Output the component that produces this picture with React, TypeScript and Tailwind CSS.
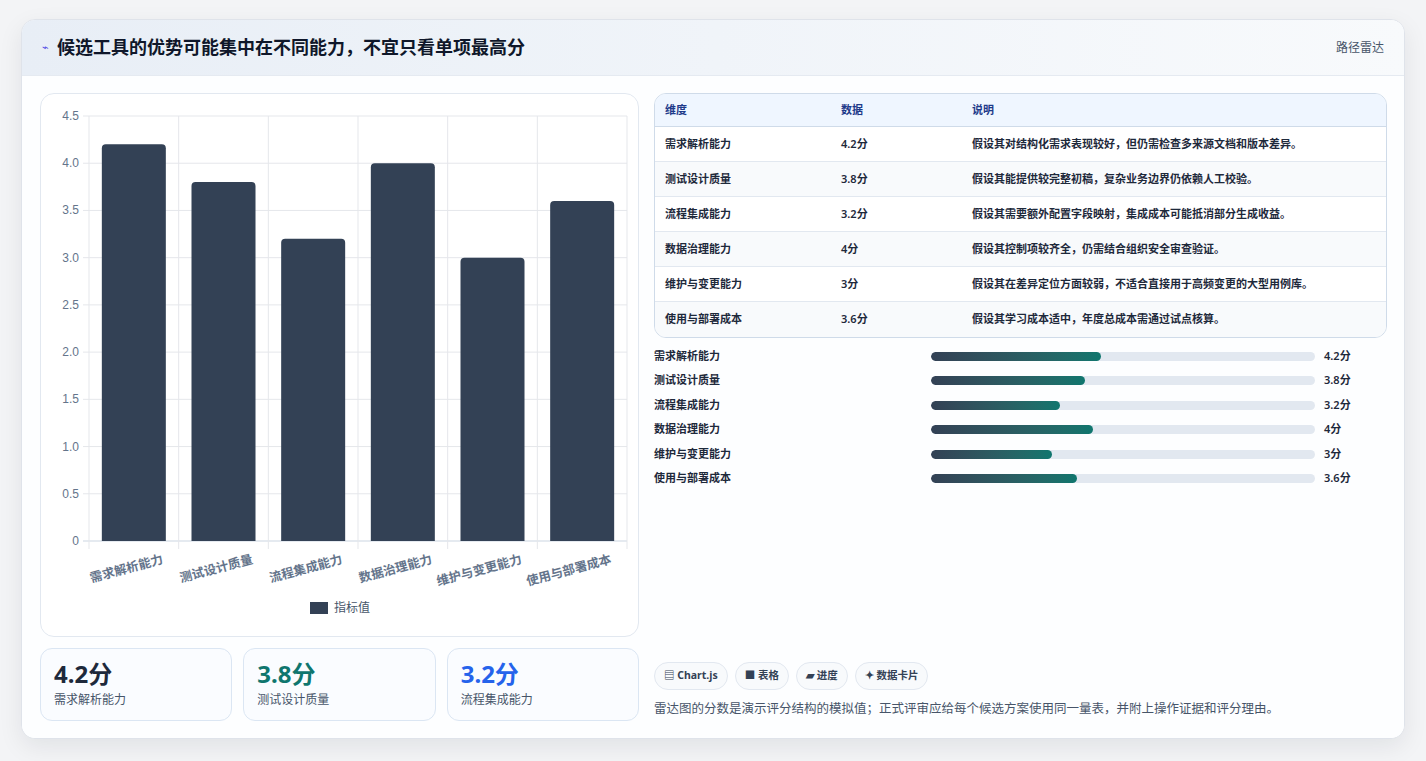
import React from "react";

const data = [
  { n: "需求解析能力", v: 4.2, d: "假设其对结构化需求表现较好，但仍需检查多来源文档和版本差异。" },
  { n: "测试设计质量", v: 3.8, d: "假设其能提供较完整初稿，复杂业务边界仍依赖人工校验。" },
  { n: "流程集成能力", v: 3.2, d: "假设其需要额外配置字段映射，集成成本可能抵消部分生成收益。" },
  { n: "数据治理能力", v: 4, d: "假设其控制项较齐全，仍需结合组织安全审查验证。" },
  { n: "维护与变更能力", v: 3, d: "假设其在差异定位方面较弱，不适合直接用于高频变更的大型用例库。" },
  { n: "使用与部署成本", v: 3.6, d: "假设其学习成本适中，年度总成本需通过试点核算。" },
];

function Chart() {
  // coords relative to card (card at page x40,y93)
  const x0 = 48, x1 = 586, y0 = 447, yTop = 22;
  const h = y0 - yTop;
  const cw = (x1 - x0) / 6;
  const ticks = [0, 0.5, 1, 1.5, 2, 2.5, 3, 3.5, 4, 4.5];
  return (
    <svg width="598" height="541" className="block">
      {ticks.map((t) => {
        const y = y0 - (t / 4.5) * h;
        return (
          <g key={t}>
            <line x1={x0 - 6} x2={x1} y1={y} y2={y} stroke={t === 0 ? "#cbd5e1" : "#e5e7eb"} />
            <text x={x0 - 10} y={y + 4} textAnchor="end" fontSize="12" fill="#64748b" fontFamily="Liberation Sans, sans-serif">
              {t === 0 ? "0" : t.toFixed(1)}
            </text>
          </g>
        );
      })}
      {Array.from({ length: 7 }).map((_, i) => (
        <line key={i} x1={x0 + i * cw} x2={x0 + i * cw} y1={yTop} y2={y0 + 8} stroke="#e5e7eb" />
      ))}
      {data.map((d, i) => {
        const cx = x0 + cw * i + cw / 2;
        const bh = (d.v / 4.5) * h;
        return (
          <g key={d.n}>
            <path d={`M${cx - 32} ${y0} V${y0 - bh + 4} Q${cx - 32} ${y0 - bh} ${cx - 28} ${y0 - bh} H${cx + 28} Q${cx + 32} ${y0 - bh} ${cx + 32} ${y0 - bh + 4} V${y0} Z`} fill="#334155" />
            <text transform={`translate(${cx + 30} ${y0 + 22}) rotate(-15)`} textAnchor="end" fontSize="12.5" fontWeight="700" fill="#64748b" fontFamily="Noto Sans CJK SC, sans-serif">
              {d.n}
            </text>
          </g>
        );
      })}
      <rect x="269" y="508" width="18" height="12" fill="#334155" />
      <text x="293" y="518" fontSize="12" fill="#475569" fontFamily="Noto Sans CJK SC, sans-serif">指标值</text>
    </svg>
  );
}

export default function App() {
  return (
    <div className="w-[1426px] h-[761px] bg-[#f3f4f6] pt-[19px] pl-[21px]" style={{ fontFamily: "'Noto Sans', 'Noto Sans CJK SC', sans-serif" }}>
      <div className="w-[1384px] h-[720px] bg-white rounded-[14px] border border-[#dfe3ea] shadow-[0_8px_24px_rgba(15,23,42,0.08)] overflow-hidden flex flex-col">
        <div className="h-[56px] flex items-center justify-between px-5 bg-gradient-to-r from-[#e8eef6] to-[#f8fafc] border-b border-[#e5eaf1]">
          <div className="flex items-center gap-2">
            <span className="text-[#4f46e5] text-[11px]">⌁</span>
            <span className="text-[18px] font-bold text-[#0f172a]">候选工具的优势可能集中在不同能力，不宜只看单项最高分</span>
          </div>
          <span className="text-[12px] text-[#475569]">路径雷达</span>
        </div>
        <div className="flex-1 flex gap-[15px] pl-[18px] pr-[17px] pt-[17px] bg-[#fdfeff]">
          <div className="w-[599px] flex flex-col gap-[11px]">
            <div className="h-[544px] border border-[#e2e8f0] rounded-[14px] bg-white overflow-hidden">
              <Chart />
            </div>
            <div className="grid grid-cols-3 gap-[11px]">
              {[["4.2分", "需求解析能力", "text-[#1e293b]"], ["3.8分", "测试设计质量", "text-[#0f766e]"], ["3.2分", "流程集成能力", "text-[#2563eb]"]].map(([v, l, c]) => (
                <div key={l} className="h-[73px] rounded-[12px] border border-[#dbe6f3] bg-[#fafcff] px-[13px] pt-[10px]">
                  <div className={`text-[24px] font-bold leading-[30px] ${c}`}>{v}</div>
                  <div className="text-[12px] text-[#475569] mt-[2px]">{l}</div>
                </div>
              ))}
            </div>
          </div>
          <div className="flex-1 flex flex-col">
            <div className="border border-[#cfdbe9] rounded-[12px] overflow-hidden">
              <div className="flex h-[33px] items-center bg-[#eff6ff] border-b border-[#cfdbe9] text-[11px] font-bold text-[#1e3a8a]">
                <div className="w-[176px] pl-[10px]">维度</div>
                <div className="w-[131px] pl-[10px]">数据</div>
                <div className="pl-[10px]">说明</div>
              </div>
              {data.map((d, i) => (
                <div key={d.n} className={`flex h-[35px] items-center text-[11px] font-semibold text-[#1e293b] ${i % 2 ? "bg-[#f8fafc]" : "bg-white"} ${i < 5 ? "border-b border-[#e2e8f0]" : ""}`}>
                  <div className="w-[176px] pl-[10px]">{d.n}</div>
                  <div className="w-[131px] pl-[10px]">{d.v}分</div>
                  <div className="pl-[10px]">{d.d}</div>
                </div>
              ))}
            </div>
            <div className="mt-[9px] flex flex-col gap-[6.5px]">
              {data.map((d) => (
                <div key={d.n} className="flex items-center h-[18px] text-[11px] font-semibold text-[#1e293b]">
                  <div className="w-[277px]">{d.n}</div>
                  <div className="w-[384px] h-[9px] rounded-full bg-[#e2e8f0] overflow-hidden">
                    <div className="h-full rounded-full bg-gradient-to-r from-[#334155] to-[#0f766e]" style={{ width: `${(d.v / 9.5) * 100}%` }} />
                  </div>
                  <div className="ml-[9px]">{d.v}分</div>
                </div>
              ))}
            </div>
            <div className="flex-1" />
            <div className="flex gap-[7px] mb-[10px]">
              {["▤ Chart.js", "■ 表格", "▰ 进度", "✦ 数据卡片"].map((t) => (
                <div key={t} className="h-[28px] px-[9px] flex items-center rounded-full border border-[#e2e8f0] bg-[#f8fafc] text-[10.5px] font-bold text-[#334155]">{t}</div>
              ))}
            </div>
            <div className="text-[12.5px] text-[#475569] mb-[19px]">雷达图的分数是演示评分结构的模拟值；正式评审应给每个候选方案使用同一量表，并附上操作证据和评分理由。</div>
          </div>
        </div>
      </div>
    </div>
  );
}
